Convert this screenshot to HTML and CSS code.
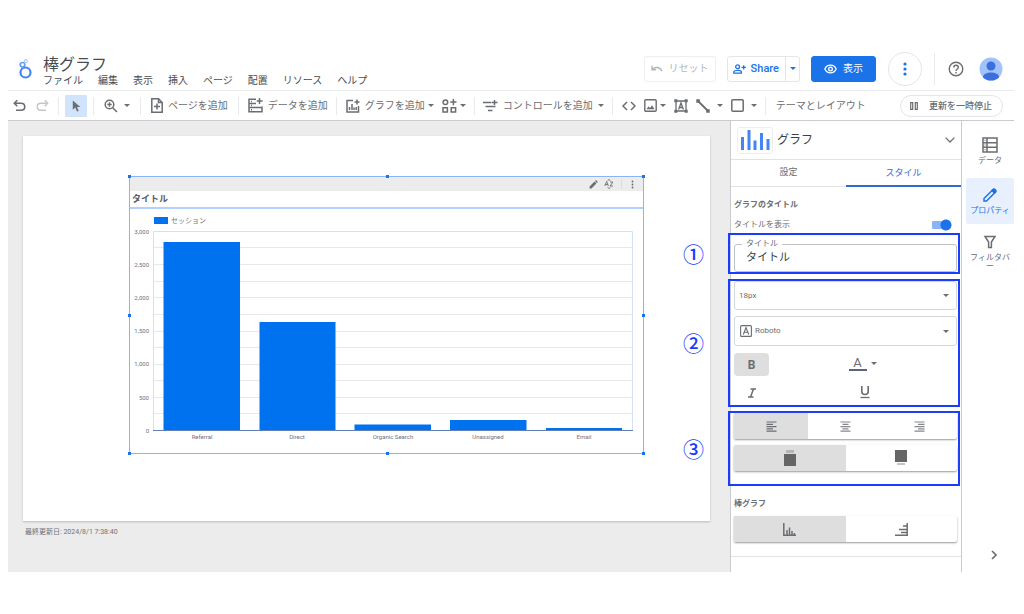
FILE: index.html
```html
<!DOCTYPE html>
<html lang="ja">
<head>
<meta charset="utf-8">
<title>棒グラフ</title>
<link rel="stylesheet" href="styles.css">
</head>
<body>
<div class="app">
  <header class="header">
    <svg class="logo" viewBox="0 0 14 20" width="14" height="20" fill="none"><circle cx="7.500" cy="13.500" r="5" stroke="#4285f4" stroke-width="2.200"/><circle cx="4.500" cy="5.800" r="2.300" stroke="#669df6" stroke-width="1.700"/><circle cx="7.800" cy="2.200" r="1.500" stroke="#aecbfa" stroke-width="1.200"/></svg>
    <div class="heading">
      <h1 class="doc-title">棒グラフ</h1>
      <nav class="menu">
        <button>ファイル</button><button>編集</button><button>表示</button><button>挿入</button><button>ページ</button><button>配置</button><button>リソース</button><button>ヘルプ</button>
      </nav>
    </div>
    <div class="actions">
      <button class="btn reset" disabled><svg viewBox="0 0 12 8" width="12" height="8" fill="none" stroke="currentColor" stroke-width="1.4"><path d="M1 .8v4h4M1.2 4.6C4 1.4 9 1.8 11 6.2"/></svg>リセット</button>
      <div class="split">
        <button class="share"><svg viewBox="0 0 13 10" width="13" height="10" fill="none" stroke="currentColor" stroke-width="1.3"><circle cx="4.6" cy="2.7" r="1.9"/><path d="M.8 9.2V8c0-2.2 7.6-2.2 7.6 0v1.2zM10.7 1.2v4.4M8.5 3.4h4.4"/></svg>Share</button>
        <button class="share-more" aria-label="共有オプション"><i class="caret"></i></button>
      </div>
      <button class="btn view"><svg viewBox="0 0 14 10" width="13" height="10" fill="none" stroke="currentColor" stroke-width="1.4"><path d="M.9 5C3.3-.5 10.7-.5 13.1 5 10.7 10.500 3.300 10.500.9 5z"/><circle cx="7" cy="5" r="2"/></svg>表示</button>
      <button class="more" aria-label="その他"><svg viewBox="0 0 4 14" width="4" height="14" fill="currentColor"><circle cx="2" cy="2" r="1.6"/><circle cx="2" cy="7" r="1.6"/><circle cx="2" cy="12" r="1.6"/></svg></button>
      <span class="rule"></span>
      <button class="help" aria-label="ヘルプ"><svg viewBox="0 0 16 16" width="16" height="16" fill="none" stroke="currentColor" stroke-width="1.4"><circle cx="8" cy="8" r="6.800"/><path d="M5.800 6.500c0-3 4.500-2.900 4.500-.1C10.300 8 8 8.100 8 10"/><path d="M8 11v1.500"/></svg></button>
      <button class="avatar" aria-label="アカウント"><svg viewBox="0 0 24 24" width="24" height="24"><defs><clipPath id="face"><circle cx="12" cy="12" r="11.500"/></clipPath></defs><g clip-path="url(#face)"><path fill="#a1c2fa" d="M0 0h24v24H0z"/><circle cx="12" cy="9" r="4.500" fill="#3b6fdb"/><path fill="#3b6fdb" d="M4 24v-4c0-6 16-6 16 0v4z"/></g></svg></button>
    </div>
  </header>

  <div class="toolbar">
    <div class="group history">
      <button aria-label="元に戻す"><svg viewBox="0 0 13 13" width="13" height="13" fill="none" stroke="currentColor" stroke-width="1.6"><path d="M4.300 1.300 1.300 4.300l3 3M1.500 4.300H8c5 0 5 7 0 7H3"/></svg></button>
      <button class="faded" aria-label="やり直す"><svg viewBox="0 0 13 13" width="13" height="13" fill="none" stroke="currentColor" stroke-width="1.400"><path d="m8.700 1.300 3 3-3 3M11.500 4.300H5c-5 0-5 7 0 7h5"/></svg></button>
    </div>
    <div class="group"><button class="pointer" aria-label="選択"><svg viewBox="0 0 9 12" width="9" height="12" fill="currentColor"><path d="M.8.5v9.200l2.500-2.100 1.700 4 1.700-.7L5 7h3.300z"/></svg></button></div>
    <div class="group zoom"><button aria-label="ズーム"><svg viewBox="0 0 14 14" width="14" height="14" fill="none" stroke="currentColor" stroke-width="1.500"><circle cx="5.500" cy="5.500" r="4.300"/><path d="m8.700 8.700 4.300 4.300M5.500 3.300v4.400M3.300 5.500h4.400"/></svg><i class="caret"></i></button></div>
    <div class="group"><button><svg viewBox="0 0 12 15" width="12" height="15" fill="none" stroke="currentColor" stroke-width="1.500"><path d="M.8.8h6.700l3.700 3.700v9.700H.8zM6 5.500v6M3 8.500h6"/><path d="M7.500.8v3.700h3.700"/></svg>ページを追加</button></div>
    <div class="group tight"><button><svg viewBox="0 0 15 15" width="15" height="15" fill="none" stroke="currentColor" stroke-width="1.500"><path d="M8 1.200H1v12.600h13V8.500M1 5.400h7M1 9.600h13M11.500 0v6M8.700 3h6"/><path d="M3 3.400h1M3 7.500h1M3 11.700h1"/></svg>データを追加</button></div>
    <div class="group tight">
      <button><svg viewBox="0 0 14 14" width="14" height="14" fill="none" stroke="currentColor" stroke-width="1.500"><path d="M7 1.500H1V13h11.500V7M11 .5v5M8.500 3h5M3.500 11V8M6 11V5M8 11V8.500M10.200 11V8"/></svg>グラフを追加<i class="caret near"></i></button>
      <button class="blend" aria-label="コミュニティ ビジュアリゼーション"><svg viewBox="0 0 15 14" width="15" height="14" fill="none" stroke="currentColor" stroke-width="1.500"><circle cx="3.400" cy="3.200" r="2.300"/><path d="M1 8.800h4.400v4.300H1zM9.200 8.800h4.400v4.300H9.200zM11.400 0v6.200M8.300 3.100h6.200"/></svg><i class="caret near"></i></button>
    </div>
    <div class="group controls"><button><svg viewBox="0 0 15 12" width="15" height="12" fill="none" stroke="currentColor" stroke-width="1.500"><path d="M0 2.500h8.500M2.500 6.500h10M5 10.500h4.500M11.500 0v5M9 2.500h5.500"/></svg>コントロールを追加<i class="caret"></i></button></div>
    <div class="group shapes">
      <button aria-label="URL の埋め込み"><svg viewBox="0 0 14 10" width="14" height="10" fill="none" stroke="currentColor" stroke-width="1.500"><path d="M5 1 1 5l4 4M9 1l4 4-4 4"/></svg></button>
      <button aria-label="画像"><svg viewBox="0 0 13 13" width="13" height="13" fill="none" stroke="currentColor" stroke-width="1.400"><rect x=".8" y=".8" width="11.400" height="11.400" rx="1"/><path fill="currentColor" stroke="none" d="m2.500 10.200 2-3 1.500 1.700 2-2.600 2.500 3.900z"/></svg><i class="caret near"></i></button>
      <button aria-label="テキスト"><svg viewBox="0 0 14 14" width="14" height="14" fill="none" stroke="currentColor" stroke-width="1.300"><path d="M2 2h10v10H2zM4.600 10.500 7 4l2.400 6.500M5.400 8.500h3.200"/><path fill="currentColor" stroke="none" d="M.3.300h3v3h-3zM10.700.3h3v3h-3zM.3 10.700h3v3h-3zM10.700 10.700h3v3h-3z"/></svg></button>
      <button class="wide" aria-label="線"><svg viewBox="0 0 14 14" width="14" height="14" fill="none" stroke="currentColor" stroke-width="1.800"><path d="m2 2 10 10"/><path fill="currentColor" stroke="none" d="M.3.300h3.500v3.500H.3zM10.200 10.200h3.500v3.500h-3.500z"/></svg><i class="caret"></i></button>
      <button class="wide" aria-label="図形"><svg viewBox="0 0 13 13" width="13" height="13" fill="none" stroke="currentColor" stroke-width="1.500"><rect x=".8" y=".8" width="11.400" height="11.400" rx="1"/></svg><i class="caret"></i></button>
    </div>
    <button class="theme">テーマとレイアウト</button>
    <button class="pause"><svg viewBox="0 0 8 8" width="8" height="8" fill="none" stroke="currentColor" stroke-width="1.200"><path d="M.7.7h2v6.600h-2zM5.300.7h2v6.600h-2z"/></svg>更新を一時停止</button>
  </div>

  <div class="work">
    <main class="canvas">
      <section class="paper">
        <div class="chart">
          <div class="chart-tools">
            <button aria-label="編集"><svg viewBox="0 0 9 9" width="9" height="9" fill="currentColor"><path d="M.6 8.400V6.500L5.500 1.600l1.900 1.900-4.900 4.900zM6 1.100l.7-.7c.5-.4 2.300 1.300 1.900 1.900l-.7.7z"/></svg></button>
            <button aria-label="並べ替え"><svg viewBox="0 0 10 10" width="10" height="10" fill="none" stroke="currentColor" stroke-width=".9"><path d="M.8 7 2.600 2.500 4.400 7M1.400 5.500h2.400M6.200 3h2.600L6.200 7h2.800M3.500 1.800 5 .5l1.500 1.300M3.500 8.200 5 9.500l1.500-1.300"/></svg></button>
            <button class="chart-more" aria-label="その他"><svg viewBox="0 0 3 9" width="3" height="9" fill="currentColor"><circle cx="1.500" cy="1.500" r=".9"/><circle cx="1.500" cy="4.500" r=".9"/><circle cx="1.500" cy="7.500" r=".9"/></svg></button>
          </div>
          <h2 class="chart-title">タイトル</h2>
          <svg class="plot" viewBox="130 209 513 244" role="img" aria-label="セッションの棒グラフ">
            <rect x="154" y="217" width="14" height="7" fill="#0072f0"/>
            <text class="legend" x="171" y="223">セッション</text>
            <path class="grid" d="M154 247.500h479M154 264.500h479M154 281.500h479M154 297.500h479M154 314.500h479M154 331.500h479M154 347.500h479M154 364.500h479M154 380.500h479M154 397.500h479M154 413.500h479"/>
            <path class="frame" d="M153.500 430V231.500h479V430"/>
            <g fill="#0072f0"><rect x="163.500" y="242" width="76.500" height="188.500"/><rect x="259.500" y="322" width="76" height="108.500"/><rect x="354.500" y="424.500" width="76.500" height="6"/><rect x="450" y="420" width="76.500" height="10.500"/><rect x="546" y="428" width="76" height="2.500"/></g>
            <path class="axis" d="M153 430.500h480"/>
            <g class="ticks end"><text x="149" y="233.500">3,000</text><text x="149" y="266.500">2,500</text><text x="149" y="299.500">2,000</text><text x="149" y="333">1,500</text><text x="149" y="366">1,000</text><text x="149" y="399.500">500</text><text x="149" y="432.500">0</text></g>
            <g class="ticks mid"><text x="202" y="439">Referral</text><text x="297" y="439">Direct</text><text x="393" y="439">Organic Search</text><text x="488" y="439">Unassigned</text><text x="584" y="439">Email</text></g>
          </svg>
          <i class="handle n w"></i><i class="handle n c"></i><i class="handle n e"></i><i class="handle m w"></i><i class="handle m e"></i><i class="handle s w"></i><i class="handle s c"></i><i class="handle s e"></i>
        </div>
      </section>
      <p class="updated">最終更新日: 2024/8/1 7:38:40</p>
    </main>

    <aside class="panel">
      <button class="panel-head">
        <span class="chart-icon"><svg viewBox="0 0 30 22" width="30" height="22" stroke="#4285f4" stroke-width="3"><path d="M2.500 21V8M9 21V1M15 21v-9.500M21.500 21V4M28 21V10"/></svg></span>
        <span class="panel-name">グラフ</span>
        <svg viewBox="0 0 10 6" width="10" height="6" fill="none" stroke="currentColor" stroke-width="1.300"><path d="m.6.6 4.400 4.400L9.400.6"/></svg>
      </button>
      <div class="tabs" role="tablist"><button role="tab">設定</button><button class="on" role="tab" aria-selected="true">スタイル</button></div>
      <h3 class="section">グラフのタイトル</h3>
      <label class="toggle">タイトルを表示<input type="checkbox" role="switch" checked></label>

      <div class="mark">
        <span class="number">①</span>
        <fieldset class="field"><legend><label for="title">タイトル</label></legend><input id="title" type="text" value="タイトル"></fieldset>
      </div>
      <div class="mark text-style">
        <span class="number">②</span>
        <div class="picker size"><select aria-label="フォントサイズ"><option>18px</option></select><i class="caret"></i></div>
        <div class="picker family"><svg viewBox="0 0 12 12" width="12" height="12" fill="none" stroke="currentColor" stroke-width="1.100"><rect x=".6" y=".6" width="10.800" height="10.800" rx="1"/><path d="M3.300 9.500 6 2.500l2.700 7M4.200 7.300h3.600"/></svg><select aria-label="フォント"><option>Roboto</option></select><i class="caret"></i></div>
        <div class="format">
          <button class="bold on" aria-label="太字" aria-pressed="true">B</button>
          <button class="color" aria-label="文字色"><span>A</span><i class="caret"></i></button>
          <button aria-label="斜体"><svg viewBox="0 0 10 10" width="10" height="10" fill="none" stroke="currentColor" stroke-width="1.500"><path d="M3.500 1H9M1 9h5.500M6.500 1 3.500 9"/></svg></button>
          <button class="under" aria-label="下線"><svg viewBox="0 0 10 13" width="10" height="13" fill="none" stroke="currentColor" stroke-width="1.600"><path d="M1.800 0v5.500c0 4 6.400 4 6.400 0V0"/><path stroke-width="1.300" d="M.5 11.500h9"/></svg></button>
        </div>
      </div>
      <div class="mark align">
        <span class="number">③</span>
        <div class="segments">
          <button class="on" aria-label="左揃え"><svg viewBox="0 0 11 11" width="11" height="11" stroke="currentColor" stroke-width="1.200"><path d="M.5 1h10M.5 3.300H7M.5 5.600h10M.5 7.900H7M.5 10.200h10"/></svg></button>
          <button class="soft" aria-label="中央揃え"><svg viewBox="0 0 11 11" width="11" height="11" stroke="currentColor" stroke-width="1.200"><path d="M.5 1h10M2.500 3.300h6M.5 5.600h10M2.500 7.900h6M.5 10.200h10"/></svg></button>
          <button class="soft" aria-label="右揃え"><svg viewBox="0 0 11 11" width="11" height="11" stroke="currentColor" stroke-width="1.200"><path d="M.5 1h10M4 3.300h6.500M.5 5.600h10M4 7.900h6.500M.5 10.200h10"/></svg></button>
        </div>
        <div class="segments">
          <button class="on" aria-label="上"><svg viewBox="0 0 12 16" width="12" height="16"><path fill="#b5b5b5" d="M2 0h8v3H2z"/><path fill="#666" d="M0 4h12v12H0z"/></svg></button>
          <button aria-label="下"><svg viewBox="0 0 12 16" width="12" height="16"><path fill="#666" d="M0 0h12v12H0z"/><path fill="#c4c4c4" d="M2 13h8v2H2z"/></svg></button>
        </div>
      </div>
      <h3 class="section">棒グラフ</h3>
      <div class="segments kind">
        <button class="on" aria-label="縦棒"><svg viewBox="0 0 13 13" width="13" height="13" fill="none" stroke="currentColor" stroke-width="1.500"><path d="M.8 0v12.200H13M4 12V7M6.500 12V4.500M9 12V8M11.300 12v-2"/></svg></button>
        <button aria-label="横棒"><svg viewBox="0 0 13 13" width="13" height="13" fill="none" stroke="currentColor" stroke-width="1.500"><path d="M12.200 0v12.200H0M12 9.500H6M12 6.500H4M12 3H8"/></svg></button>
      </div>
    </aside>

    <nav class="rail">
      <button><svg viewBox="0 0 16 16" width="16" height="16" fill="none" stroke="currentColor" stroke-width="1.500"><path d="M1 1h14v14H1zM1 5.700h14M1 10.300h14M5 1v14" /><path stroke-width="1" d="M2.500 3.400h1M2.500 8h1M2.500 12.600h1"/></svg>データ</button>
      <button class="on"><svg viewBox="0 0 16 16" width="16" height="16" fill="none" stroke="currentColor" stroke-width="1.500"><path d="M2 14v-2.500L10.800 2.700c1-1 3.500 1.500 2.500 2.500L4.500 14z"/><path fill="currentColor" d="m10 3.500 1.300-1.300c1-1 3.500 1.500 2.500 2.500L12.500 6z"/></svg>プロパティ</button>
      <button class="filter"><svg viewBox="0 0 14 14" width="14" height="14" fill="none" stroke="currentColor" stroke-width="1.500"><path d="M2 1.500h10L8.400 7v5.500H5.600V7z"/></svg><span class="wrap">フィルタバー</span></button>
      <button class="collapse" aria-label="閉じる"><svg viewBox="0 0 6 10" width="6" height="10" fill="none" stroke="currentColor" stroke-width="1.600"><path d="m1 1 4 4-4 4"/></svg></button>
    </nav>
  </div>
</div>
</body>
</html>
```
FILE: styles.css
```css
* { box-sizing: border-box; }
body {
  margin: 0;
  background: #fff;
  color: #6a6d71;
  font: 10px/14px Roboto, "Noto Sans CJK JP", sans-serif;
}
button, input, select { font: inherit; color: inherit; }
button { display: flex; align-items: center; margin: 0; padding: 0; border: 0; background: none; }
svg { display: block; flex: none; }
h1, h2, h3, p { margin: 0; font-weight: 400; }

.app { display: flex; flex-direction: column; min-height: 100vh; padding: 47px 10px 42px 8px; }
.caret { flex: none; border: 3px solid transparent; border-top-color: currentColor; border-bottom: 0; }

/* header */
.header { display: flex; align-items: center; height: 44px; border-bottom: 1px solid #e8eaed; }
.logo { margin-left: 10px; }
.heading { margin-left: 11px; }
.doc-title { padding-top: 5px; font-size: 16px; line-height: 20px; color: #4a4c50; }
.menu { display: flex; gap: 15px; color: #4a4c50; }
.menu button { line-height: 12px; white-space: nowrap; }
.actions { display: flex; align-items: center; margin-left: auto; padding-right: 11px; }
.btn { justify-content: center; height: 26px; border: 1px solid #eceef0; border-radius: 3px; }
.reset { gap: 6px; width: 72px; margin-right: 11px; color: #b4b6b9; }
.split { display: flex; height: 26px; margin-right: 11px; border: 1px solid #e3e5e8; border-radius: 3px; color: #1a73e8; }
.share { gap: 5px; padding: 0 6px 0 5px; font-size: 11px; font-weight: 500; }
.share-more { justify-content: center; width: 14px; border-left: 1px solid #e3e5e8; }
.view { gap: 6px; width: 65px; margin-right: 12px; border-color: #1a73e8; background: #1a73e8; color: #fff; }
.more { justify-content: center; width: 34px; height: 34px; border: 1px solid #e3e5e8; border-radius: 50%; color: #1a73e8; }
.rule { width: 1px; height: 32px; margin: 0 13px 0 12px; background: #e8eaed; }
.avatar { margin-left: 15px; }

/* toolbar */
.toolbar { display: flex; align-items: center; height: 30px; border-bottom: 1px solid #c9cbce; white-space: nowrap; }
.group { display: flex; align-items: center; gap: 8px; height: 18px; padding: 0 10px; border-right: 1px solid #e8eaed; }
.group button { gap: 5px; }
.history { gap: 10px; padding: 0 9px 0 5px; }
.history + .group { padding: 0 6px; }
.faded { color: #c4c6c9; }
.pointer { justify-content: center; width: 22px; height: 22px; background: #d2e3fc; border-radius: 1px; }
.group.tight { padding: 0 8px 0 9px; }
.caret.near { margin-left: -2px; }
.zoom button { gap: 6px; }
.group.controls { padding: 0 8px; }
.group.shapes { gap: 8px; padding: 0 8px 0 9px; }
.shapes .wide { gap: 7px; }
.theme { margin-left: 10px; }
.pause { gap: 11px; height: 22px; margin: 0 11px 0 auto; padding: 0 10px 0 9px; border: 1px solid #e3e5e8; border-radius: 11px; font-size: 9px; font-weight: 500; }

/* report */
.work { display: flex; flex: 1; }
.canvas { flex: 1; min-width: 0; padding: 15px 20px 0 15px; background: #ececec; }
.paper { aspect-ratio: 688 / 386; padding: 40px 66px 0 106px; background: #fff; box-shadow: 0 1px 2px #bbb; }
.chart { position: relative; border: 1px solid #8ab4f8; }
.chart-tools { display: flex; align-items: center; justify-content: flex-end; gap: 6px; height: 14px; padding-right: 9px; background: #ececec; }
.chart-more { margin-left: 1px; padding-left: 9px; border-left: 1px solid #dadce0; }
.chart-title { height: 18px; padding-left: 2px; border-bottom: 2px solid #b3cffb; font-size: 9px; font-weight: 700; line-height: 17px; color: #5b5b68; }
.plot { width: 100%; height: auto; }
.plot .legend { font-size: 7px; fill: #757580; }
.plot .grid { stroke: #e8e8e8; }
.plot .frame { fill: none; stroke: #d3e1f8; }
.plot .axis { stroke: #5f7fb8; }
.plot .ticks { font-size: 6px; fill: #70707c; }
.plot .end { text-anchor: end; }
.plot .mid { text-anchor: middle; }
.handle { position: absolute; width: 3px; height: 3px; background: #1a73e8; }
.n { top: -2px; }
.m { top: calc(50% - 1px); }
.s { bottom: -2px; }
.w { left: -2px; }
.c { left: calc(50% - 1px); }
.e { right: -2px; }
.updated { padding: 4px 0 0 2px; font-size: 7px; color: #6f7275; }

/* properties */
.panel { width: 232px; padding-bottom: 15px; border: solid #c9cbce; border-width: 0 1px; }
.panel-head { width: 100%; height: 39px; padding: 0 6px; border-bottom: 1px solid #e0e2e5; }
.chart-icon { display: flex; align-items: center; justify-content: center; width: 36px; height: 27px; border: 1px solid #eceef0; border-radius: 3px; }
.panel-name { flex: 1; padding-left: 4px; font-size: 12px; text-align: left; color: #3c4043; }
.tabs { display: flex; height: 27px; margin-bottom: 11px; border-bottom: 1px solid #e0e2e5; font-size: 9px; }
.tabs button { flex: 1; justify-content: center; padding-bottom: 2px; }
.tabs .on { border-bottom: 2px solid #3367d6; padding-bottom: 0; color: #3367d6; height: 27px; }
.section { padding-left: 3px; font-size: 8px; font-weight: 700; }
.toggle { display: flex; align-items: center; justify-content: space-between; height: 21px; padding: 4px 9px 0 3px; font-size: 8px; }
.toggle input { appearance: none; width: 20px; height: 12px; margin: 0; background: radial-gradient(circle at 14px 6px, #1a73e8 5px, transparent 6px), linear-gradient(#8ab4f8, #8ab4f8) 0 2px / 16px 8px no-repeat; border-radius: 4px 6px 6px 4px; }
.mark { position: relative; margin: 0 1px 5px -3px; border: 2px solid #1a3cff; padding: 0 1px 0 4px; }
.number { position: absolute; left: -47px; top: 50%; margin-top: -15px; font: 500 21px/28px "Noto Sans CJK JP", sans-serif; color: #1a3cff; }
.field { min-width: 0; height: 35px; margin: 2px 0 0; padding: 0 11px; border: 1px solid #bfc1c4; border-radius: 3px; }
.field legend { margin-left: -4px; padding: 0 4px; font-size: 8px; line-height: 14px; }
.field input { display: block; width: 100%; padding: 0; border: 0; outline: 0; background: none; font-size: 11px; line-height: 14px; height: 14px; color: #3c4043; }
.picker { display: flex; align-items: center; height: 30px; margin-bottom: 6px; padding: 0 7px 0 5px; border: 1px solid #d5d7da; border-radius: 3px; font-size: 8px; }
.picker select { flex: 1; appearance: none; padding: 0; border: 0; background: none; }
.size { height: 29px; padding-left: 4px; }
.family select { padding-left: 3px; }
.format { display: grid; grid-template-columns: 1fr 1fr; grid-auto-rows: 25px; gap: 4px 0; margin-bottom: -1px; }
.format button { justify-content: center; width: 35px; height: 23px; border-radius: 4px; }
.format .bold { margin-top: 1px; font-size: 12px; font-weight: 700; }
.format .on { background: #dedede; }
.format .color { gap: 4px; width: 34px; }
.color span { width: 18px; border-bottom: 2px solid #5b6478; font-size: 13px; line-height: 13px; }
.under { margin-left: 2px; }
.text-style { margin-bottom: 4px; }
.align { padding-bottom: 13px; margin-bottom: 11px; }
.segments { display: flex; height: 26px; border-radius: 2px; box-shadow: 0 1px 2px #999; }
.segments + .segments { margin-top: 6px; }
.segments button { flex: 1; justify-content: center; }
.segments .on { background: #dedede; }
.soft { color: #85888c; }
.kind { margin: 5px 4px 14px 3px; }
.panel::after { content: ""; display: block; border-top: 1px solid #e0e2e5; }

/* side rail */
.rail { display: flex; flex-direction: column; align-items: flex-end; width: 52px; padding-top: 8px; font-size: 8px; }
.rail button { flex-direction: column; justify-content: center; gap: 1px; width: 48px; height: 46px; border-radius: 2px; }
.rail button + button { margin-top: 3px; }
.rail .on { padding-top: 3px; background: #e8f0fe; color: #1a73e8; }
.rail .filter { padding-top: 5px; }
.rail .wrap { width: 42px; line-height: 9px; line-break: anywhere; padding-top: 3px; }
.rail .collapse { height: 34px; margin: auto 0 0; padding-left: 7px; }
```
